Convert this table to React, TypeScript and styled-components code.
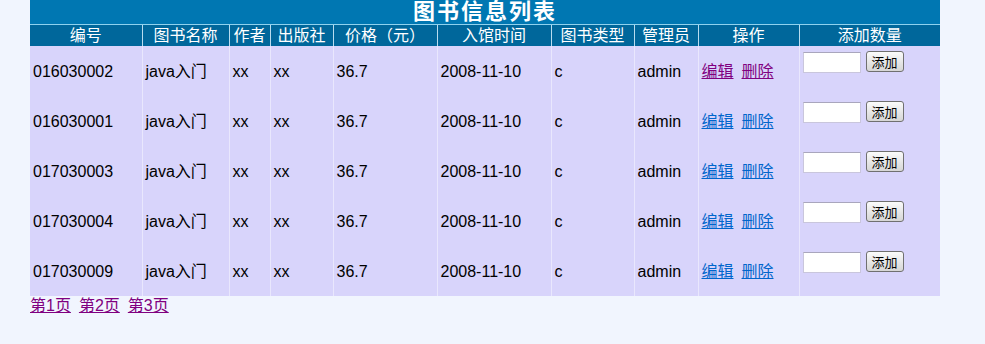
import React from "react";
import styled, { createGlobalStyle } from "styled-components";

type Book = {
	id: string;
	name: string;
	author: string;
	press: string;
	price: string;
	date: string;
	type: string;
	admin: string;
	visited?: boolean;
};

const books: Book[] = [
	{ id: "016030002", name: "java入门", author: "xx", press: "xx", price: "36.7", date: "2008-11-10", type: "c", admin: "admin", visited: true },
	{ id: "016030001", name: "java入门", author: "xx", press: "xx", price: "36.7", date: "2008-11-10", type: "c", admin: "admin" },
	{ id: "017030003", name: "java入门", author: "xx", press: "xx", price: "36.7", date: "2008-11-10", type: "c", admin: "admin" },
	{ id: "017030004", name: "java入门", author: "xx", press: "xx", price: "36.7", date: "2008-11-10", type: "c", admin: "admin" },
	{ id: "017030009", name: "java入门", author: "xx", press: "xx", price: "36.7", date: "2008-11-10", type: "c", admin: "admin" },
];

const columns = [
	{ title: "编号", width: 112 },
	{ title: "图书名称", width: 87 },
	{ title: "作者", width: 41 },
	{ title: "出版社", width: 63 },
	{ title: "价格（元）", width: 104 },
	{ title: "入馆时间", width: 114 },
	{ title: "图书类型", width: 83 },
	{ title: "管理员", width: 64 },
	{ title: "操作", width: 101 },
	{ title: "添加数量", width: 141 },
];

const GlobalStyle = createGlobalStyle`
	html, body {
		margin: 0;
		padding: 0;
		background: #f1f5fe;
		font-family: "Liberation Sans", "Noto Sans CJK SC", Arial, sans-serif;
	}
`;

export default function App() {
	return (
		<>
			<GlobalStyle />
			<Page>
				<BookTable>
					<colgroup>
						{columns.map((c) => (
							<col key={c.title} style={{ width: c.width }} />
						))}
					</colgroup>
					<thead>
						<tr>
							<TitleCell colSpan={columns.length}>图书信息列表</TitleCell>
						</tr>
						<tr>
							{columns.map((c) => (
								<HeadCell key={c.title}>{c.title}</HeadCell>
							))}
						</tr>
					</thead>
					<tbody>
						{books.map((b) => (
							<tr key={b.id}>
								<Cell>{b.id}</Cell>
								<Cell>{b.name}</Cell>
								<Cell>{b.author}</Cell>
								<Cell>{b.press}</Cell>
								<Cell>{b.price}</Cell>
								<Cell>{b.date}</Cell>
								<Cell>{b.type}</Cell>
								<Cell>{b.admin}</Cell>
								<Cell>
									<ActionLink href="#" $visited={b.visited}>编辑</ActionLink>
									<ActionLink href="#" $visited={b.visited}>删除</ActionLink>
								</Cell>
								<AddCell>
									<AddForm>
										<CountInput type="text" />
										<AddButton type="button">添加</AddButton>
									</AddForm>
								</AddCell>
							</tr>
						))}
					</tbody>
				</BookTable>
				<Pager>
					<PageLink href="#">第1页</PageLink>
					<PageLink href="#">第2页</PageLink>
					<PageLink href="#">第3页</PageLink>
				</Pager>
			</Page>
		</>
	);
}

const Page = styled.div`
	padding-left: 30px;
	width: 910px;
`;

const BookTable = styled.table`
	width: 910px;
	table-layout: fixed;
	border-collapse: collapse;
	background: #d8d4fb;
`;

const TitleCell = styled.th`
	height: 24px;
	padding: 0;
	background: #0077b2;
	color: #ffffff;
	font-size: 22px;
	line-height: 24px;
	letter-spacing: 2px;
	font-weight: bold;
	text-align: center;
	border-bottom: 1px solid #8fd2ee;
`;

const HeadCell = styled.th`
	height: 21px;
	padding: 0;
	background: #00679b;
	color: #ffffff;
	font-size: 16px;
	line-height: 20px;
	font-weight: normal;
	text-align: center;
	white-space: nowrap;
	overflow: hidden;
	border-left: 1px solid #b9dcef;
	&:first-child {
		border-left: none;
	}
`;

const Cell = styled.td`
	box-sizing: border-box;
	height: 50px;
	padding: 2px 0 0 3px;
	font-size: 16px;
	line-height: 20px;
	color: #000000;
	vertical-align: middle;
	white-space: nowrap;
	border-left: 1px solid #e9e7fd;
	&:first-child {
		border-left: none;
	}
`;

const AddCell = styled(Cell)`
	vertical-align: top;
	padding-top: 0;
`;

const AddForm = styled.div`
	display: flex;
	align-items: flex-start;
	gap: 5px;
	padding-top: 5px;
`;

const CountInput = styled.input`
	box-sizing: border-box;
	width: 58px;
	height: 21px;
	margin: 1px 0 0 0;
	padding: 0 2px;
	background: #ffffff;
	border: 1px solid #c9c6dc;
	border-top-color: #a9a6bd;
	font-size: 13px;
	outline: none;
`;

const AddButton = styled.button`
	box-sizing: border-box;
	width: 38px;
	height: 21px;
	padding: 0;
	background: linear-gradient(#fbfbfb, #e4e4e4 60%, #d6d6d6);
	border: 1px solid #707070;
	border-radius: 3px;
	font-family: "Noto Sans CJK SC", sans-serif;
	font-size: 13px;
	line-height: 17px;
	color: #000000;
`;

const ActionLink = styled.a<{ $visited?: boolean }>`
	color: ${(p) => (p.$visited ? "#800080" : "#0066cc")};
	text-decoration: underline;
	margin-right: 8px;
`;

const Pager = styled.div`
	display: flex;
	gap: 8px;
	font-size: 16px;
	line-height: 20px;
`;

const PageLink = styled.a`
	color: #800080;
	text-decoration: underline;
`;
